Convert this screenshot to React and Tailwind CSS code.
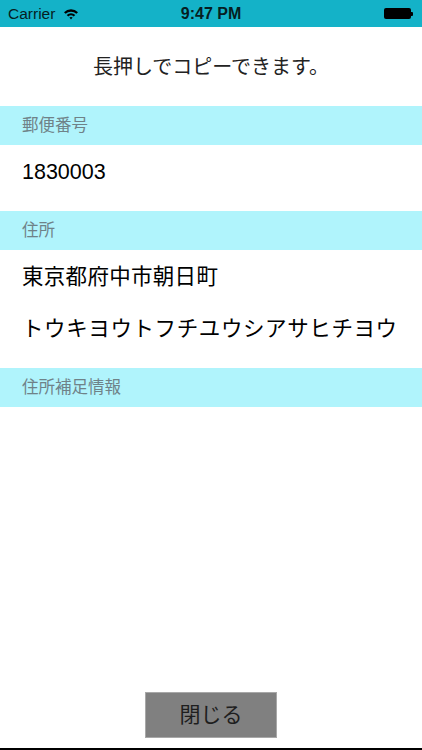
import React from 'react';

const jp = { fontFamily: '"Liberation Sans", "Noto Sans CJK JP", sans-serif' };

const Wifi = () => (
  <svg width="16" height="12" viewBox="0 0 16 12" className="ml-[8px]">
    <path d="M1 4.2 A10 10 0 0 1 15 4.2 L13.4 5.8 A7.8 7.8 0 0 0 2.6 5.8 Z" fill="#000" />
    <path d="M3.7 6.9 A6.2 6.2 0 0 1 12.3 6.9 L10.7 8.5 A4 4 0 0 0 5.3 8.5 Z" fill="#000" />
    <path d="M6.4 9.6 A2.4 2.4 0 0 1 9.6 9.6 L8 11.4 Z" fill="#000" />
  </svg>
);

const Battery = () => (
  <div className="flex items-center">
    <div className="w-[27px] h-[11px] bg-black rounded-[2px]" />
    <div className="w-[2px] h-[4px] bg-black rounded-r-[1px]" />
  </div>
);

const SectionHeader = ({ label }) => (
  <div className="h-[39px] bg-[#b0f4fc] flex items-center px-[22px]">
    <span className="text-[16.5px] text-[#6f8288]">{label}</span>
  </div>
);

export default function App() {
  return (
    <div className="h-[750px] w-full flex flex-col bg-white text-black" style={jp}>
      {/* status bar */}
      <div className="h-[27px] bg-[#14b2c8] flex items-center justify-between px-[8px] relative">
        <div className="flex items-center">
          <span className="text-[15.5px] text-[#061e22]">Carrier</span>
          <Wifi />
        </div>
        <span className="absolute left-0 right-0 text-center text-[16px] font-bold text-[#061e22] pointer-events-none">
          9:47 PM
        </span>
        <div className="pr-[1px]">
          <Battery />
        </div>
      </div>

      <div className="h-[79px] flex items-center justify-center">
        <span className="text-[20px] text-[#222]">長押しでコピーできます。</span>
      </div>

      <SectionHeader label="郵便番号" />
      <div className="h-[66px] flex items-center px-[22px] pb-[12px]">
        <span className="text-[21.5px]">1830003</span>
      </div>

      <SectionHeader label="住所" />
      <div className="h-[118px] pt-px px-[22px] whitespace-nowrap">
        <div className="h-[52px] flex items-center text-[21.5px] tracking-[0.3px]">東京都府中市朝日町</div>
        <div className="h-[52px] flex items-center text-[21.5px] tracking-[0.6px]">トウキヨウトフチユウシアサヒチヨウ</div>
      </div>

      <SectionHeader label="住所補足情報" />

      <div className="flex-1" />

      <div className="flex justify-center mb-[10px]">
        <button className="w-[132px] h-[46px] bg-[#808080] border border-[#a8a8a8] text-[21px] text-[#1e1e1e]">
          閉じる
        </button>
      </div>
      <div className="h-[2px] bg-black" />
    </div>
  );
}
